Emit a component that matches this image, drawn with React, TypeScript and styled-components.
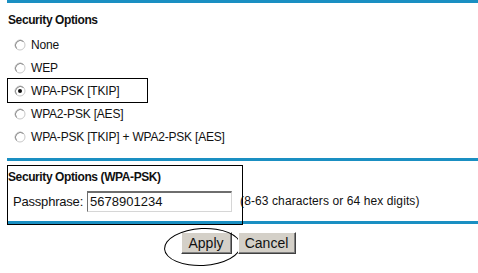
import React from 'react';
import styled, { createGlobalStyle } from 'styled-components';

const GlobalStyle = createGlobalStyle`
  html, body {
    margin: 0;
    padding: 0;
    background: #fff;
  }
  body {
    font-family: "Liberation Sans", Arial, sans-serif;
    color: #111;
  }
`;

const Page = styled.div`
  width: 478px;
  height: 273px;
  box-sizing: border-box;
  padding-left: 7px;
  display: flex;
  flex-direction: column;
  overflow: hidden;
`;

const Rule = styled.div<{ $top: number }>`
  height: 3px;
  margin-top: ${({ $top }) => $top}px;
  background: #1a8fc2;
  flex-shrink: 0;
`;

const SectionTitle = styled.div<{ $top: number }>`
  margin-top: ${({ $top }) => $top}px;
  padding-left: 1px;
  font-size: 12px;
  font-weight: bold;
  letter-spacing: -0.4px;
  line-height: 16px;
`;

const RadioList = styled.div`
  margin-top: 5px;
  display: flex;
  flex-direction: column;
`;

const RadioRow = styled.label<{ $marked?: boolean }>`
  position: relative;
  display: flex;
  align-items: center;
  gap: 5px;
  height: 23px;
  padding-left: 7px;
  font-size: 12px;
  letter-spacing: -0.2px;

  ${({ $marked }) =>
    $marked &&
    `
    &::after {
      content: '';
      position: absolute;
      left: 0;
      top: -1px;
      width: 141px;
      height: 25px;
      border: 1px solid #000;
      box-sizing: border-box;
    }
  `}
`;

const RadioIcon: React.FC<{ checked?: boolean }> = ({ checked }) => (
  <svg width="12" height="12" viewBox="0 0 12 12">
    <circle cx="6" cy="6" r="5" fill="#fff" stroke="#c8c8c8" strokeWidth="1" />
    <path d="M2.5 9.5 A5 5 0 0 1 9.5 2.5" fill="none" stroke="#8a8a8a" strokeWidth="1" />
    {checked && <circle cx="6" cy="6" r="2" fill="#111" />}
  </svg>
);

const PskSection = styled.div`
  position: relative;
  display: flex;
  flex-direction: column;

  &::after {
    content: '';
    position: absolute;
    left: 0;
    top: 4px;
    width: 236px;
    height: 60px;
    border: 1px solid #000;
    box-sizing: border-box;
    pointer-events: none;
  }
`;

const FieldRow = styled.div`
  margin-top: 5px;
  display: flex;
  align-items: center;
  height: 22px;
  padding-left: 6px;
  font-size: 13px;
  letter-spacing: -0.2px;
`;

const FieldLabel = styled.span`
  margin-right: 4px;
`;

const TextInput = styled.input`
  width: 145px;
  height: 21px;
  box-sizing: border-box;
  padding: 0 2px;
  border: 1px solid;
  border-color: #6e6e6e #d6d6d6 #d6d6d6 #6e6e6e;
  border-top-width: 2px;
  font-family: "Liberation Sans", Arial, sans-serif;
  font-size: 13px;
  color: #111;
  outline: none;
`;

const Hint = styled.span`
  margin-left: 8px;
  font-size: 12px;
  letter-spacing: 0.1px;
`;

const ButtonRow = styled.div`
  margin-top: 8px;
  display: flex;
  justify-content: center;
  gap: 6px;
  padding-right: 9px;
`;

const Button = styled.button<{ $circled?: boolean; $width: number }>`
  position: relative;
  width: ${({ $width }) => $width}px;
  height: 22px;
  padding: 0;
  background: #d4d0c8;
  border: 1px solid;
  border-color: #fff #404040 #404040 #fff;
  box-shadow: inset -1px -1px 0 #808080;
  font-family: "Liberation Sans", Arial, sans-serif;
  font-size: 14px;
  color: #111;

  ${({ $circled }) =>
    $circled &&
    `
    &::after {
      content: '';
      position: absolute;
      left: -18px;
      top: -5px;
      width: 77px;
      height: 38px;
      border: 1px solid #000;
      border-radius: 50%;
      box-sizing: border-box;
      transform: rotate(-3deg);
    }
  `}
`;

const options = [
  { label: 'None' },
  { label: 'WEP' },
  { label: 'WPA-PSK [TKIP]', checked: true },
  { label: 'WPA2-PSK [AES]' },
  { label: 'WPA-PSK [TKIP] + WPA2-PSK [AES]' },
];

export default function App() {
  return (
    <>
      <GlobalStyle />
      <Page>
        <Rule $top={0} />
        <SectionTitle $top={9}>Security Options</SectionTitle>
        <RadioList>
          {options.map((o) => (
            <RadioRow key={o.label} $marked={o.checked}>
              <RadioIcon checked={o.checked} />
              {o.label}
            </RadioRow>
          ))}
        </RadioList>
        <Rule $top={10} />
        <PskSection>
          <SectionTitle $top={8}>Security Options (WPA-PSK)</SectionTitle>
          <FieldRow>
            <FieldLabel>Passphrase:</FieldLabel>
            <TextInput defaultValue="5678901234" />
            <Hint>(8-63 characters or 64 hex digits)</Hint>
          </FieldRow>
        </PskSection>
        <Rule $top={9} />
        <ButtonRow>
          <Button $circled $width={51}>Apply</Button>
          <Button $width={58}>Cancel</Button>
        </ButtonRow>
      </Page>
    </>
  );
}
